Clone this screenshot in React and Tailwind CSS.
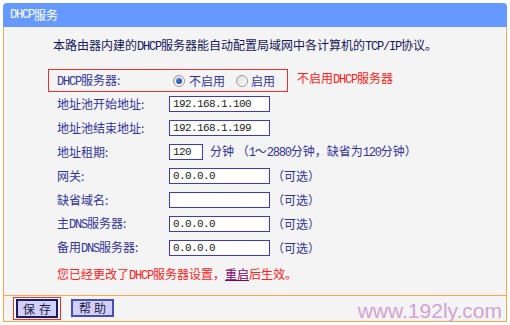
const cjk = "font-['Noto_Sans_CJK_SC','Noto_Sans',sans-serif]";

// ascii runs look like a 6px-wide bitmap font in the original
function A({ children }) {
  return (
    <span className="font-['Liberation_Mono',monospace] text-[12px] tracking-[-1.2px]">
      {children}
    </span>
  );
}

function Radio({ checked }) {
  return (
    <span className="w-[12px] h-[12px] rounded-full border border-[#9a9a9a] bg-gradient-to-br from-[#dcdcdc] to-[#ffffff] flex items-center justify-center">
      {checked && (
        <span className="w-[6px] h-[6px] rounded-full bg-gradient-to-br from-[#5d8fe0] to-[#123f9a]" />
      )}
    </span>
  );
}

function Input({ value, narrow }) {
  return (
    <div
      className={`${narrow ? "w-[34px]" : "w-[101px]"} h-[16px] border border-[#3a3ac4] bg-white pl-[3px] flex items-center font-['Liberation_Mono',monospace] text-[11px] tracking-[-0.6px] text-[#222]`}
    >
      {value}
    </div>
  );
}

function Row({ label, value, narrow, after }) {
  return (
    <div className="h-[24px] flex items-center">
      <div className="w-[112px] text-[#333399]">{label}</div>
      <Input value={value} narrow={narrow} />
      {after}
    </div>
  );
}

const optional = <span className="ml-[2px] text-[#333399]">（可选）</span>;

export default function App() {
  return (
    <div className={`w-[510px] h-[325px] bg-white pt-[3px] pl-[3px] text-[12px] leading-[16px] ${cjk}`}>
      <div className="w-[504px]">
        {/* title bar */}
        <div className="h-[24px] bg-[#6699ff] rounded-t-[4px] pl-[7px] flex items-center text-white">
          <A>DHCP</A>服务
        </div>

        {/* body */}
        <div className="h-[268px] bg-[#f4f4f4] border-x border-[#ffa64d] pt-[10px]">
          <p className="pl-[49px] text-[#16165c]">
            本路由器内建的<A>DHCP</A>服务器能自动配置局域网中各计算机的<A>TCP/IP</A>协议。
          </p>

          <div className="mt-[14px] flex items-center">
            <div className="ml-[44px] w-[240px] h-[23px] border border-[#e83030] pl-[8px] flex items-center text-[#333399]">
              <div className="w-[116px]">
                <A>DHCP</A>服务器:
              </div>
              <Radio checked />
              <span className="ml-[4px]">不启用</span>
              <span className="ml-[11px]">
                <Radio />
              </span>
              <span className="ml-[3px]">启用</span>
            </div>
            <span className="ml-[9px] -mt-[3px] text-[#ff2020]">
              不启用<A>DHCP</A>服务器
            </span>
          </div>

          <div className="pl-[53px]">
            <Row label="地址池开始地址:" value="192.168.1.100" />
            <Row label="地址池结束地址:" value="192.168.1.199" />
            <Row
              label="地址租期:"
              value="120"
              narrow
              after={
                <span className="ml-[7px] text-[#333399]">
                  分钟 （<A>1</A>～<A>2880</A>分钟，缺省为<A>120</A>分钟）
                </span>
              }
            />
            <Row label="网关:" value="0.0.0.0" after={optional} />
            <Row label="缺省域名:" value="" after={optional} />
            <Row
              label={
                <>
                  主<A>DNS</A>服务器:
                </>
              }
              value="0.0.0.0"
              after={optional}
            />
            <Row
              label={
                <>
                  备用<A>DNS</A>服务器:
                </>
              }
              value="0.0.0.0"
              after={optional}
            />
            <p className="mt-[6px] text-[#ff2020]">
              您已经更改了<A>DHCP</A>服务器设置，
              <span className="text-[#800066] underline">重启</span>后生效。
            </p>
          </div>
        </div>

        {/* footer */}
        <div className="h-[27px] border border-[#ffa64d] bg-[#f4f4f4] pl-[9px] pt-[1px] flex items-start">
          <div className="w-[48px] h-[23px] border border-[#e83030] px-[2px] py-[1px]">
            <button className="w-[42px] h-[19px] border-2 border-[#1c1c5c] bg-[#d0d0fa] flex items-center justify-center gap-[4px] text-[#1a1a40]">
              <span>保</span>
              <span>存</span>
            </button>
          </div>
          <button className="ml-[10px] mt-[2px] w-[43px] h-[18px] border-2 border-[#4b4bc0] bg-[#d0d0fa] flex items-center justify-center gap-[3px] text-[#1a1a40]">
            <span>帮</span>
            <span>助</span>
          </button>
          <span className="ml-auto mr-[4px] mt-[3px] font-['Liberation_Sans',Arial,sans-serif] text-[21px] leading-[21px] text-[#d2a2d6]">
            www.192ly.com
          </span>
        </div>
      </div>
    </div>
  );
}
